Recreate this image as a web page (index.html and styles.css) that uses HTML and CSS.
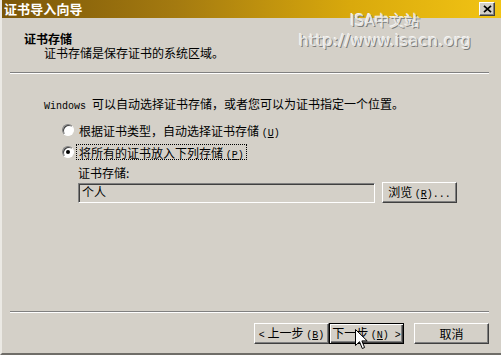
FILE: index.html
```html
<!DOCTYPE html>
<html>
<head>
<meta charset="utf-8">
<title>证书导入向导</title>
<link rel="stylesheet" href="styles.css">
</head>
<body>
<div class="window">
  <div class="titlebar">
    <span class="title">证书导入向导</span>
    <span class="close"><svg width="9" height="8" viewBox="0 0 9 8"><path d="M1 0.8L8 7.2M8 0.8L1 7.2" stroke="#000" stroke-width="1.7"/></svg></span>
  </div>
  <div class="header">
    <div class="h-title">证书存储</div>
    <div class="h-sub">证书存储是保存证书的系统区域。</div>
  </div>
  <div class="sep"></div>
  <div class="content">
    <p class="intro"><span class="latin">Windows </span>可以自动选择证书存储，或者您可以为证书指定一个位置。</p>
    <div class="radio-row">
      <span class="radio"></span>
      <span class="rlabel">根据证书类型，自动选择证书存储 <span class="latin">(<u>U</u>)</span></span>
    </div>
    <div class="radio-row second">
      <span class="radio checked"></span>
      <span class="rlabel focus">将所有的证书放入下列存储 <span class="latin">(<u>P</u>)</span></span>
    </div>
    <div class="store">
      <div class="store-label">证书存储:</div>
      <div class="store-row">
        <div class="textbox">个人</div>
        <button class="btn browse">浏览 <span class="latin">(<u>R</u>)...</span></button>
      </div>
    </div>
  </div>
  <div class="sep"></div>
  <div class="footer">
    <button class="btn"><span class="latin">&lt;</span> 上一步 <span class="latin">(<u>B</u>)</span></button>
    <button class="btn default">下一步 <span class="latin">(<u>N</u>) &gt;</span></button>
    <button class="btn cancel">取消</button>
  </div>
  <div class="watermark">
    <div class="wm1">ISA中文站</div>
    <div class="wm2">http://www.isacn.org</div>
  </div>
  <svg class="cursor" width="13" height="21" viewBox="0 0 13 21"><path d="M0.5 0.5V16.5L4.5 12.7L7.3 19.5L9.6 18.5L6.9 11.9H12.2Z" fill="#fff" stroke="#000" stroke-width="1" stroke-linejoin="miter"/></svg>
</div>
</body>
</html>
```

FILE: styles.css
```css
* { box-sizing: border-box; }
html, body { margin: 0; padding: 0; background: #d4d0c8; }
body {
  font-family: "Noto Sans CJK SC", "Noto Sans", sans-serif;
  font-size: 12px;
  color: #000;
}
.window {
  position: relative;
  width: 501px;
  height: 355px;
  background: #d4d0c8;
  border-left: 2px solid #ebe9e4;
  border-bottom: 2px solid #6f6d68;
  display: flex;
  flex-direction: column;
  overflow: hidden;
}
.titlebar {
  height: 18px;
  margin-left: -2px;
  padding: 0 6px 0 4px;
  background: linear-gradient(to right, #7a5608 0%, #a47a10 35%, #d9a90c 70%, #f2c414 100%);
  display: flex;
  align-items: center;
  justify-content: space-between;
}
.title {
  color: #fff;
  font-weight: bold;
  font-size: 13px;
  line-height: 18px;
  letter-spacing: 0.1px;
}
.close {
  width: 16px;
  height: 14px;
  background: #d4d0c8;
  border: 1px solid;
  border-color: #fff #404040 #404040 #fff;
  box-shadow: inset -1px -1px #808080;
  display: flex;
  align-items: center;
  justify-content: center;
}
.header { padding: 14px 0 0 22px; }
.h-title { font-weight: bold; line-height: 14px; }
.h-sub { padding-left: 20px; line-height: 14px; }
.sep {
  margin: 12px 12px 0 8px;
  height: 2px;
  border-top: 1px solid #808080;
  border-bottom: 1px solid #fff;
}
.content {
  flex: 1;
  padding-left: 42px;
}
.latin { font-family: "Liberation Mono", monospace; font-size: 10px; }
.intro { margin: 23px 0 0; line-height: 14px; }
.radio-row {
  margin-top: 8px;
  height: 16px;
  padding-left: 18px;
  display: flex;
  align-items: center;
}
.radio-row.second { margin-top: 6px; }
.radio {
  width: 12px;
  height: 12px;
  border-radius: 50%;
  background: #fff;
  border: 1px solid;
  border-color: #808080 #fff #fff #808080;
  box-shadow: inset 1px 1px 0 #404040;
  position: relative;
}
.radio.checked::after {
  content: "";
  position: absolute;
  left: 3px;
  top: 3px;
  width: 4px;
  height: 4px;
  border-radius: 50%;
  background: #000;
}
.rlabel {
  margin-left: 2px;
  padding: 0 2px;
  height: 16px;
  line-height: 15px;
  border: 1px solid transparent;
}
.rlabel.focus { border: 1px dotted #000; }
.store { padding-left: 34px; margin-top: 6px; }
.store-label { line-height: 14px; }
.store-row { margin-top: 2px; display: flex; align-items: flex-start; }
.textbox {
  margin-top: 1px;
  width: 297px;
  height: 20px;
  padding: 0 3px;
  line-height: 16px;
  border: 1px solid;
  border-color: #808080 #fff #fff #808080;
  box-shadow: inset 1px 1px 0 #404040, inset -1px -1px 0 #d4d0c8;
  background: #d4d0c8;
}
.btn {
  width: 75px;
  height: 21px;
  padding: 0;
  font-family: inherit;
  font-size: 12px;
  line-height: 17px;
  color: #000;
  background: #d4d0c8;
  border: 1px solid;
  border-color: #fff #404040 #404040 #fff;
  box-shadow: inset -1px -1px 0 #808080;
  text-align: center;
}
.browse { margin-left: 7px; }
.footer {
  height: 40px;
  padding: 10px 12px 0 0;
  display: flex;
  justify-content: flex-end;
  align-items: flex-start;
}
.btn.default {
  border: 1px solid #000;
  box-shadow: inset 1px 1px 0 #fff, inset -1px -1px 0 #404040, inset -2px -2px 0 #808080;
}
.btn.cancel { margin-left: 10px; }
.watermark {
  position: absolute;
  left: 288px;
  top: 12px;
  width: 190px;
  text-align: center;
  font-family: "DejaVu Sans", sans-serif;
  color: #e6e6e4;
  text-shadow: 1px 1px 0 #7c7c7a, -1px -1px 0 #f4f4f2;
  line-height: 19px;
}
.wm1 { font-size: 15px; }
.wm2 { font-size: 16px; letter-spacing: 0.4px; }
.cursor {
  position: absolute;
  left: 353px;
  top: 329px;
}
```
